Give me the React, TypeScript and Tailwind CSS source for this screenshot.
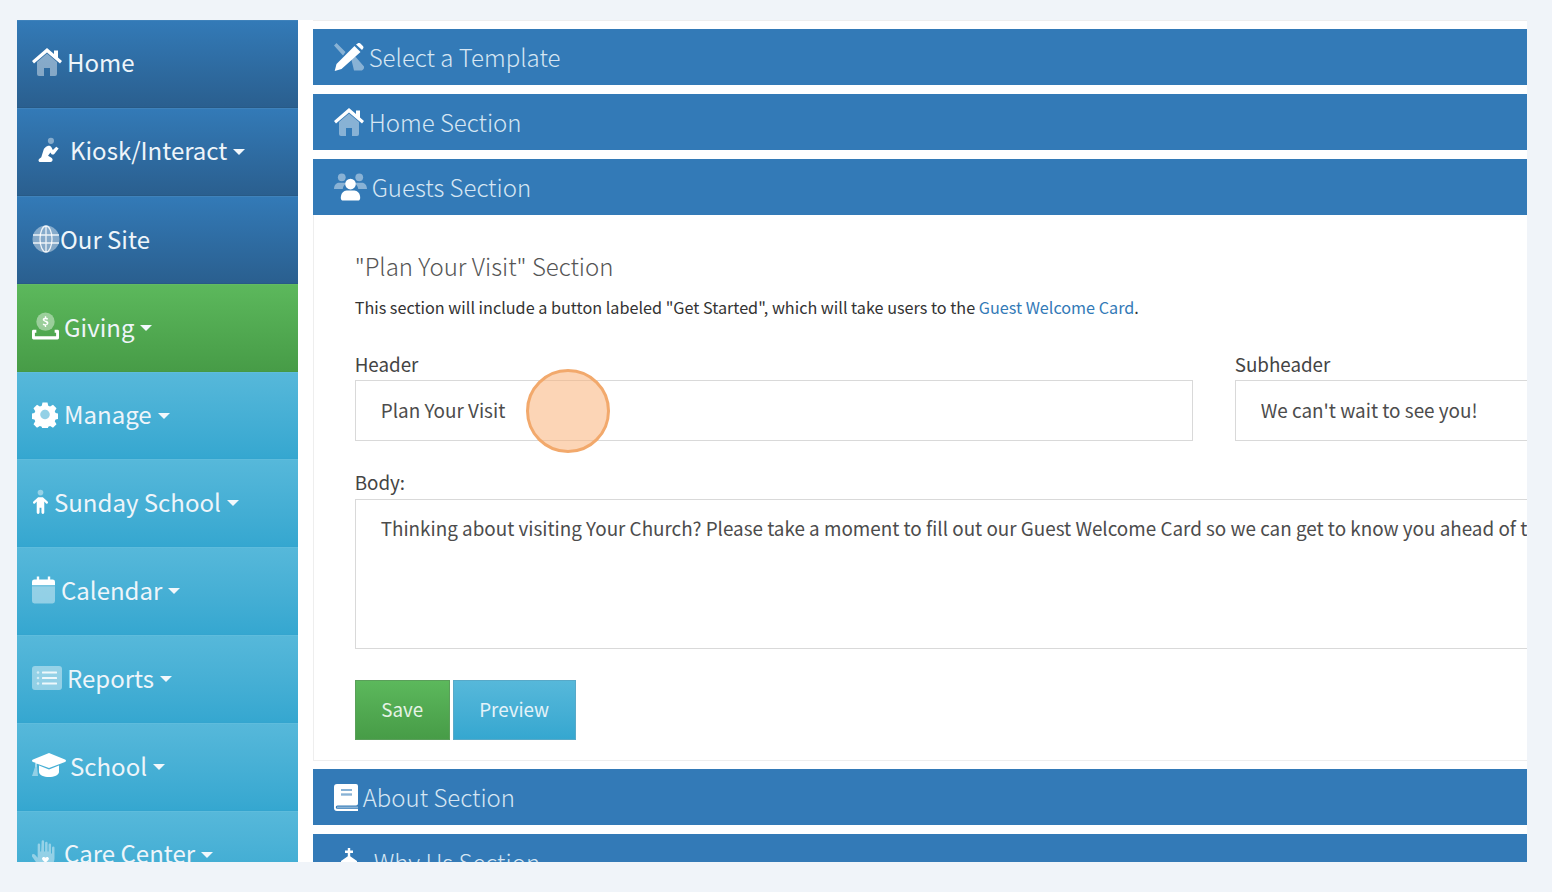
import React from "react";

const FONT = '"Noto Sans CJK SC", "Noto Sans", sans-serif';

type IconProps = { className?: string };

const HomeIcon = ({ className }: IconProps) => (
  <svg viewBox="0 0 30 28" className={className} fill="white">
    <path opacity=".42" d="M5 14 15 5.500 25 14v12a2 2 0 0 1-2 2h-5v-8h-6v8H7a2 2 0 0 1-2-2z" />
    <path d="M15 0 22 6V2.500h4v7L30 13l-2 2.500L15 4.500 2 15.500 0 13z" />
  </svg>
);
const PrayIcon = ({ className }: IconProps) => (
  <svg viewBox="0 0 22 28" className={className} fill="white">
    <circle opacity=".42" cx="13" cy="4" r="3.200" />
    <path d="M9 9.500c2-1 3.500-.5 4.500 1l1.500 3 3.500-3.500 2.500 2-4.500 5.500c-1 1-2.500 1-3.200-.2l-.8-1.300-2.500 3.500 3.500 2c2 1.200 1.500 4.500-1 4.500H2c-2 0-2.500-2.500-1-3.500l2-1.500 2.500-8c.5-1.500 2-2.800 3.500-3.500z" />
  </svg>
);
const GlobeIcon = ({ className }: IconProps) => (
  <svg viewBox="0 0 28 28" className={className}>
    <circle cx="14" cy="14" r="13.500" fill="white" opacity=".42" />
    <g fill="none" stroke="white" strokeOpacity=".85" strokeWidth="1.300">
      <ellipse cx="14" cy="14" rx="6" ry="13" />
      <path d="M1 10h26M1 18h26M14 1v26" />
    </g>
  </svg>
);
const DonateIcon = ({ className }: IconProps) => (
  <svg viewBox="0 0 28 28" className={className} fill="white">
    <circle opacity=".42" cx="14" cy="9.500" r="9.500" />
    <path d="M12.500 9c-1.800-.5-2-3.200.8-3.500V4h1.400v1.500c1 .1 1.800.5 2 1l-.8 1c-.8-.6-3.400-.8-3 .3.300.7 4.300.7 4.100 3 0 1.300-1 2-2.300 2.200V15h-1.400v-1.500c-1 0-1.900-.5-2.300-1l.9-1c.9.800 3.400 1.100 3.400-.2 0-.8-1.700-1.800-2.800-2.300z" />
    <path d="M0 19.500A1.500 1.500 0 0 1 1.500 18H4.500v3H3v3.500h22V21h-1.500v-3h3a1.500 1.500 0 0 1 1.500 1.500v7a1.500 1.500 0 0 1-1.500 1.500h-25A1.500 1.500 0 0 1 0 26.500z" />
  </svg>
);
const CogIcon = ({ className }: IconProps) => (
  <svg viewBox="0 0 28 28" className={className} fill="white">
    <path
      fillRule="evenodd"
      d="M11.300 1h5.400l.8 3.500 2 .9 3.100-1.900 3.800 3.800-1.900 3.100.9 2 3.500.8v5.400l-3.500.8-.9 2 1.900 3.100-3.800 3.800-3.100-1.900-2 .9-.8 3.500h-5.400l-.8-3.500-2-.9-3.100 1.900-3.800-3.800 1.900-3.100-.9-2-3.500-.8v-5.400l3.500-.8.900-2-1.900-3.100 3.800-3.800 3.100 1.900 2-.9z M14 9a5 5 0 1 0 0 10 5 5 0 0 0 0-10z"
    />
    <circle opacity=".42" cx="14" cy="14" r="5" />
  </svg>
);
const ChildIcon = ({ className }: IconProps) => (
  <svg viewBox="0 0 18 26" className={className} fill="white">
    <circle opacity=".42" cx="9" cy="3" r="3" />
    <path d="M6.500 8h5l5 4.500c1.200 1.200-.3 3-1.600 2L13 12.500V24a1.500 1.500 0 0 1-3 .2V19H8v5.200A1.500 1.500 0 0 1 5 24V12.500l-1.900 2c-1.300 1-2.800-.8-1.600-2z" />
  </svg>
);
const CalendarIcon = ({ className }: IconProps) => (
  <svg viewBox="0 0 24 28" className={className} fill="white">
    <path opacity=".42" d="M0 10h24v15.500a2.500 2.500 0 0 1-2.500 2.500h-19A2.500 2.500 0 0 1 0 25.500z" />
    <path d="M5 0h2.500v3h9V0H19v3h2.500A2.500 2.500 0 0 1 24 5.500V9H0V5.500A2.500 2.500 0 0 1 2.500 3H5z" />
  </svg>
);
const ListIcon = ({ className }: IconProps) => (
  <svg viewBox="0 0 30 24" className={className} fill="white">
    <rect opacity=".42" width="30" height="24" rx="3" />
    <g opacity=".85">
      <rect x="10" y="5.500" width="15" height="2" rx=".5" />
      <rect x="10" y="11" width="15" height="2" rx=".5" />
      <rect x="10" y="16.500" width="15" height="2" rx=".5" />
    </g>
    <g opacity=".6">
      <circle cx="6" cy="6.500" r="1.300" />
      <circle cx="6" cy="12" r="1.300" />
      <circle cx="6" cy="17.500" r="1.300" />
    </g>
  </svg>
);
const CapIcon = ({ className }: IconProps) => (
  <svg viewBox="0 0 34 25" className={className} fill="white">
    <path d="M17 0 33 6.500c1.300.6 1.300 2 0 2.500L17 15 4.500 10.500V14H3.500V9.800L1 9C-.3 8.500-.3 7 1 6.500z" />
    <path opacity=".42" d="M3 14h2l1 9H0z" />
    <path d="M7 12.500 17 16.500l10-4v6.500c0 3-5 5-10 5S7 22 7 19z" />
  </svg>
);
const HandIcon = ({ className }: IconProps) => (
  <svg viewBox="0 0 26 28" className={className} fill="white">
    <path
      opacity=".42"
      d="M10 1.500a1.300 1.300 0 0 1 2.600 0V12h1V3a1.300 1.300 0 0 1 2.600 0v9h1V5a1.300 1.300 0 0 1 2.600 0v9h1V8a1.300 1.300 0 0 1 2.600 0v11c0 5-3.500 9-8.500 9h-3c-3 0-5-1-7-4l-5-7c-1-2 1.500-3.500 3-2l3 3.500V5a1.300 1.300 0 0 1 2.600 0v7h1z"
    />
    <path d="M14 18.500c1-1.800 4-1 3.500 1.300-.3 1.400-2.200 2.700-3.500 3.700-1.300-1-3.200-2.300-3.500-3.700-.5-2.300 2.500-3.100 3.500-1.300z" />
  </svg>
);
const ToolsIcon = ({ className }: IconProps) => (
  <svg viewBox="0 0 30 28" className={className} fill="white">
    <path opacity=".42" d="M0 2.500 2.500 0l9 9-2.500 3.500zM17 15l3-3 10 11.500c.5 2.500-1.500 4.500-4 4H20z" />
    <path d="M22 1.500 24 .3c.8-.5 1.800-.4 2.400.2l2.500 2.500c.7.700.8 1.700.2 2.500L28 7zM20.500 3 26.500 9 7.500 26l-6.800 2 1.800-7z" />
  </svg>
);
const UsersIcon = ({ className }: IconProps) => (
  <svg viewBox="0 0 34 28" className={className} fill="white">
    <g opacity=".42">
      <circle cx="8" cy="4" r="4" />
      <circle cx="26" cy="4" r="4" />
      <path d="M0 16c0-4 2.500-6.500 5-6.500h5c1 0 2 .5 2.500 1-1.500 1-3 3-3.500 5.500zM34 16c0-4-2.500-6.500-5-6.500h-5c-1 0-2 .5-2.500 1 1.500 1 3 3 3.500 5.500z" />
    </g>
    <circle cx="17" cy="11" r="5.500" />
    <path d="M7 25c0-4.500 3-7.500 6-7.500h8c3 0 6 3 6 7.500 0 2-1 3-2.500 3h-15C8 28 7 27 7 25z" />
  </svg>
);
const BookIcon = ({ className }: IconProps) => (
  <svg viewBox="0 0 24 27" className={className} fill="white">
    <path
      fillRule="evenodd"
      d="M3 0h19a2 2 0 0 1 2 2v17.500a2 2 0 0 1-2 2H3.500a1.700 1.700 0 0 0 0 3.500H24v2H3a3 3 0 0 1-3-3V3a3 3 0 0 1 3-3zm4 5v2h11V5zm0 4.500v2h11v-2z"
    />
    <rect opacity=".42" x="7" y="5" width="11" height="2" />
    <rect opacity=".42" x="7" y="9.500" width="11" height="2" />
    <rect opacity=".42" x="3" y="22.500" width="21" height="2" />
  </svg>
);
const ChurchIcon = ({ className }: IconProps) => (
  <svg viewBox="0 0 24 28" className={className} fill="white">
    <path d="M10.800 0h2.400v2.500H16v2.400h-2.800v3.300L20 13v3H4v-3l6.800-4.800V4.900H8V2.500h2.800z" />
    <path d="M2 18h20v10H2z" />
  </svg>
);

const Caret = () => (
  <span className="ml-[6px] mt-[3px] inline-block h-0 w-0 shrink-0 border-x-[6.500px] border-t-[6.500px] border-x-transparent border-t-[#f2f8fc]" />
);

type NavItem = {
  label: string;
  icon: React.ReactNode;
  caret?: boolean;
  tone: "blue" | "green" | "cyan";
  inset: string;
};

const TONES: Record<NavItem["tone"], string> = {
  blue: "bg-gradient-to-b from-[#337ab7] to-[#2a5f8f] border-t-[#3f82bb] border-b-[#285a86]",
  green: "bg-gradient-to-b from-[#5cb85c] to-[#479c47] border-t-[#62ba62] border-b-[#459945]",
  cyan: "bg-gradient-to-b from-[#56b8da] to-[#35a7d0] border-t-[#5ebcdc] border-b-[#34a5cf]",
};

const NAV: NavItem[] = [
  { label: "Home", tone: "blue", inset: "pb-[3px]", icon: <HomeIcon className="mr-[5px] h-[28px] w-[30px]" /> },
  { label: "Kiosk/Interact", tone: "blue", inset: "pb-[3px]", caret: true, icon: <PrayIcon className="ml-[6px] mr-[10px] h-[27px] w-[22px]" /> },
  { label: "Our Site", tone: "blue", inset: "pb-[2px]", icon: <GlobeIcon className="h-[28px] w-[28px]" /> },
  { label: "Giving", tone: "green", inset: "pb-[2px]", caret: true, icon: <DonateIcon className="mb-[2px] mr-[5px] h-[28px] w-[27px]" /> },
  { label: "Manage", tone: "cyan", inset: "pb-[3px]", caret: true, icon: <CogIcon className="mr-[6px] h-[27px] w-[26px]" /> },
  { label: "Sunday School", tone: "cyan", inset: "pb-[3px]", caret: true, icon: <ChildIcon className="mr-[5px] h-[26px] w-[17px]" /> },
  { label: "Calendar", tone: "cyan", inset: "pb-[3px]", caret: true, icon: <CalendarIcon className="mr-[6px] h-[28px] w-[23px]" /> },
  { label: "Reports", tone: "cyan", inset: "pb-[3px]", caret: true, icon: <ListIcon className="mr-[5px] h-[24px] w-[30px]" /> },
  { label: "School", tone: "cyan", inset: "pb-[3px]", caret: true, icon: <CapIcon className="mr-[4px] h-[25px] w-[34px]" /> },
  { label: "Care Center", tone: "cyan", inset: "pb-[3px]", caret: true, icon: <HandIcon className="mr-[7px] h-[27px] w-[25px]" /> },
];

const SectionBar = ({ icon, label }: { icon: React.ReactNode; label: string }) => (
  <div className="flex h-[56px] shrink-0 items-center bg-[#337ab7] pl-[21px] text-[24px] font-light text-[#d6e6f3]">
    {icon}
    <span>{label}</span>
  </div>
);

const fieldClass =
  "block h-[61px] w-[838px] border border-[#d9d9d9] bg-white px-[25px] pb-[2px] text-[18.900px] text-[#4c4c4c] outline-none";

export default function App() {
  return (
    <div className="h-[892px] overflow-hidden bg-[#f0f4f9] pb-[30px] pl-[17px] pr-[25.300px] pt-[20px]" style={{ fontFamily: FONT }}>
      <div className="flex h-[842px] overflow-hidden bg-white">
        <nav className="w-[280.700px] shrink-0">
          {NAV.map((item) => (
            <div
              key={item.label}
              className={`flex h-[87.900px] items-center border-y pl-[15px] text-[24px] leading-none text-[#eef5fa] ${item.inset} ${TONES[item.tone]}`}
            >
              {item.icon}
              <span>{item.label}</span>
              {item.caret && <Caret />}
            </div>
          ))}
        </nav>
        <main className="min-w-0 flex-1 overflow-hidden pl-[15px]">
          <div className="flex w-[1800px] flex-col gap-[9px] pt-[9px] shadow-[inset_0_1px_0_#eeeeee]">
            <SectionBar icon={<ToolsIcon className="mr-[5px] h-[28px] w-[30px]" />} label="Select a Template" />
            <SectionBar icon={<HomeIcon className="mr-[5px] h-[28px] w-[30px]" />} label="Home Section" />
            <div>
              <SectionBar icon={<UsersIcon className="mr-[5px] h-[28px] w-[33px]" />} label="Guests Section" />
              <section className="relative -mb-px h-[546px] border border-t-0 border-[#eeeeee] bg-white pl-[41px]">
                <h3 className="pt-[32px] text-[24px] font-light leading-[38px] text-[#555555]">"Plan Your Visit" Section</h3>
                <p className="mt-[9px] text-[16.200px] leading-[26px] text-[#333333]">
                  This section will include a button labeled "Get Started", which will take users to the{" "}
                  <span className="text-[#337ab7]">Guest Welcome Card</span>.
                </p>
                <div className="mt-[28px] flex gap-[42px]">
                  <label className="block">
                    <span className="block text-[18.800px] leading-[32px] text-[#444444]">Header</span>
                    <input readOnly value="Plan Your Visit" className={fieldClass} />
                  </label>
                  <label className="block">
                    <span className="block text-[18.800px] leading-[32px] text-[#444444]">Subheader</span>
                    <input readOnly value="We can't wait to see you!" className={fieldClass} />
                  </label>
                </div>
                <label className="mt-[24px] block">
                  <span className="block text-[18.800px] leading-[34px] text-[#444444]">Body:</span>
                  <textarea
                    readOnly
                    value="Thinking about visiting Your Church? Please take a moment to fill out our Guest Welcome Card so we can get to know you ahead of time."
                    className="block h-[150px] w-[1718px] resize-none border border-[#d9d9d9] bg-white px-[25px] py-[13px] text-[18.850px] leading-[29px] text-[#4c4c4c] outline-none"
                  />
                </label>
                <div className="mt-[31px] flex gap-[3px]">
                  <button className="h-[60px] w-[95px] border border-[#5a9f5a] bg-gradient-to-b from-[#5cb85c] to-[#479c47] pb-[2px] text-[18.800px] text-[#e6f3e6]">
                    Save
                  </button>
                  <button className="h-[60px] w-[123px] border border-[#58a9c8] bg-gradient-to-b from-[#56b8da] to-[#35a7d0] pb-[2px] text-[18.800px] text-[#e4f3f9]">
                    Preview
                  </button>
                </div>
                {/* click highlight */}
                <span className="absolute left-[212px] top-[154px] h-[84px] w-[84px] rounded-full border-[3px] border-[#f2a96c] bg-[#f9b27a]/55" />
              </section>
            </div>
            <SectionBar icon={<BookIcon className="mr-[5px] h-[27px] w-[24px]" />} label="About Section" />
            <SectionBar icon={<ChurchIcon className="mr-[10px] h-[28px] w-[30px]" />} label="Why Us Section" />
          </div>
        </main>
      </div>
    </div>
  );
}
